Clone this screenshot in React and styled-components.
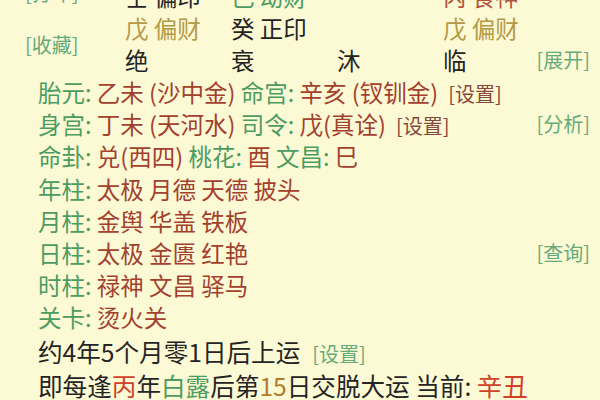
import styled, { createGlobalStyle } from 'styled-components'

const GlobalStyle = createGlobalStyle`
  html, body {
    margin: 0;
    padding: 0;
    background: #fcfad5;
    overflow: hidden;
  }
  body {
    font-family: 'Noto Sans CJK SC', 'Noto Sans', sans-serif;
    color: #262626;
  }
`

const colors = {
  green: '#4c9c62',
  light: '#66aa7a',
  red: '#a3402e',
  brown: '#87473a',
  gold: '#b39a48',
  rust: '#b0553b',
  dark: '#242424',
  orange: '#b27a2c',
  bright: '#cf4129',
}

const Page = styled.div`
  width: 600px;
  height: 400px;
  overflow: hidden;
  background: #fcfad5;
`

const StemGrid = styled.div`
  margin-top: -20px;
  display: grid;
  grid-template-columns: 125px 106px 106px 106px 1fr auto;
  grid-template-rows: repeat(3, 32px);
  padding-right: 10px;
  font-size: 23.5px;
  line-height: 32px;
`

const SideCol = styled.div`
  grid-row: 1 / span 3;
  display: flex;
  flex-direction: column;
  gap: 28px;
  padding: 1px 0 0 25px;
`

const Link = styled.span`
  font-size: 20px;
  line-height: 24px;
  color: ${(p) => colors[p.$tone || 'light']};
  margin-left: ${(p) => p.$gap || 0}px;
  white-space: nowrap;
`

const Cell = styled.div`
  color: ${(p) => colors[p.$tone || 'dark']};
  white-space: nowrap;
  grid-column: ${(p) => p.$col};
  grid-row: ${(p) => p.$row};
`

const EdgeLink = styled(Link)`
  grid-column: 6;
  grid-row: 3;
  align-self: center;
  justify-self: end;
`

const Info = styled.div`
  padding: 0 10px 0 38px;
  display: flex;
  flex-direction: column;
`

const Line = styled.div`
  display: flex;
  align-items: center;
  justify-content: space-between;
  height: ${(p) => (p.$big ? 34 : 32.2)}px;
  font-size: ${(p) => (p.$big ? 24.6 : 23.5)}px;
  white-space: nowrap;
`

const Text = styled.span`
  color: ${(p) => colors[p.$tone || 'dark']};
  font-size: ${(p) => (p.$size ? p.$size + 'px' : 'inherit')};
`

const stems = [
  { col: 2, row: 1, tone: 'dark', text: '壬 偏印' },
  { col: 3, row: 1, tone: 'green', text: '己 劫财' },
  { col: 5, row: 1, tone: 'rust', text: '丙 食神' },
  { col: 2, row: 2, tone: 'gold', text: '戊 偏财' },
  { col: 3, row: 2, tone: 'dark', text: '癸 正印' },
  { col: 5, row: 2, tone: 'gold', text: '戊 偏财' },
  { col: 2, row: 3, tone: 'dark', text: '绝' },
  { col: 3, row: 3, tone: 'dark', text: '衰' },
  { col: 4, row: 3, tone: 'dark', text: '沐' },
  { col: 5, row: 3, tone: 'dark', text: '临' },
]

const shensha = [
  ['年柱', '太极 月德 天德 披头'],
  ['月柱', '金舆 华盖 铁板'],
  ['日柱', '太极 金匮 红艳', '[查询]'],
  ['时柱', '禄神 文昌 驿马'],
  ['关卡', '烫火关'],
]

const App = () => {
  return (
    <Page>
      <GlobalStyle />
      <StemGrid>
        <SideCol>
          <Link>[打印]</Link>
          <Link>[收藏]</Link>
        </SideCol>
        {stems.map((s, i) => (
          <Cell key={i} $col={s.col} $row={s.row} $tone={s.tone}>
            {s.text}
          </Cell>
        ))}
        <EdgeLink>[展开]</EdgeLink>
      </StemGrid>

      <Info>
        <Line>
          <span>
            <Text $tone='green'>胎元: </Text>
            <Text $tone='red'>乙未 (沙中金) </Text>
            <Text $tone='green'>命宫: </Text>
            <Text $tone='red'>辛亥 (钗钏金)</Text>
            <Link $tone='brown' $gap={10}>[设置]</Link>
          </span>
        </Line>
        <Line>
          <span>
            <Text $tone='green'>身宫: </Text>
            <Text $tone='red'>丁未 (天河水) </Text>
            <Text $tone='green'>司令: </Text>
            <Text $tone='red'>戊(真诠)</Text>
            <Link $tone='brown' $gap={10}>[设置]</Link>
          </span>
          <Link>[分析]</Link>
        </Line>
        <Line>
          <span>
            <Text $tone='green'>命卦: </Text>
            <Text $tone='red'>兑(西四) </Text>
            <Text $tone='green'>桃花: </Text>
            <Text $tone='red'>酉 </Text>
            <Text $tone='green'>文昌: </Text>
            <Text $tone='red'>巳</Text>
          </span>
        </Line>
        {shensha.map(([label, value, link]) => (
          <Line key={label}>
            <span>
              <Text $tone='green'>{label}: </Text>
              <Text $tone='red'>{value}</Text>
            </span>
            {link && <Link>{link}</Link>}
          </Line>
        ))}
        <Line $big>
          <span>
            <Text>约4年5个月零1日后上运</Text>
            <Link $gap={12}>[设置]</Link>
          </span>
        </Line>
        <Line $big>
          <span>
            <Text>即每逢</Text>
            <Text $tone='bright'>丙</Text>
            <Text>年</Text>
            <Text $tone='green'>白露</Text>
            <Text>后第</Text>
            <Text $tone='orange'>15</Text>
            <Text>日交脱大运 当前: </Text>
            <Text $tone='bright' $size={25.5}>辛丑</Text>
          </span>
        </Line>
      </Info>
    </Page>
  )
}

export default App
